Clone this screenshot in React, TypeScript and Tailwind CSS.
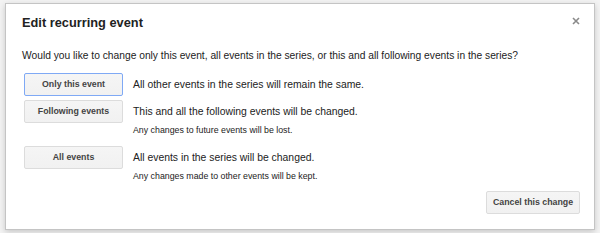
import React from "react";

const btn =
  "h-[23px] rounded-[2px] border bg-gradient-to-b from-[#f5f5f5] to-[#f1f1f1] text-[8.8px] font-bold text-[#444] flex items-center justify-center";

function Row({
  label,
  text,
  sub,
  focused,
}: {
  label: string;
  text: string;
  sub?: string;
  focused?: boolean;
}) {
  return (
    <div className="flex items-start">
      <button
        className={`${btn} w-[99px] shrink-0 ${
          focused ? "border-[#7fa9f5]" : "border-[#dcdcdc]"
        }`}
      >
        {label}
      </button>
      <div className="ml-[10px] flex flex-col">
        <div className="h-[23px] flex items-center text-[10.4px] text-[#222]">{text}</div>
        {sub && <div className="mt-[2px] text-[8.8px] leading-[11px] text-[#222]">{sub}</div>}
      </div>
    </div>
  );
}

export default function App() {
  return (
    <div
      className="w-[600px] h-[233px] bg-[#f3f3f3] pt-[3px] pl-[5px] overflow-hidden"
      style={{ fontFamily: '"Liberation Sans", Arial, sans-serif' }}
    >
      <div className="relative w-[590px] h-[227px] border border-[#c4c4c4] bg-white shadow-[0_2px_6px_rgba(0,0,0,0.18)] pl-[16px] pr-[14px] pt-[11px] flex flex-col">
        <div className="text-[12.8px] leading-[16px] font-bold text-[#222]">Edit recurring event</div>
        <svg
          className="absolute right-[14px] top-[13px]"
          width="8"
          height="8"
          viewBox="0 0 8 8"
        >
          <path d="M1 1L7 7M7 1L1 7" stroke="#8a8a8a" strokeWidth="1.6" />
        </svg>
        <div className="mt-[18px] text-[10.25px] leading-[13px] text-[#222]">
          Would you like to change only this event, all events in the series, or this and all following events in the series?
        </div>
        <div className="mt-[11px] flex flex-col ml-[2px]">
          <Row label="Only this event" text="All other events in the series will remain the same." focused />
          <div className="mt-[4px]">
            <Row
              label="Following events"
              text="This and all the following events will be changed."
              sub="Any changes to future events will be lost."
            />
          </div>
          <div className="mt-[10px]">
            <Row
              label="All events"
              text="All events in the series will be changed."
              sub="Any changes made to other events will be kept."
            />
          </div>
        </div>
        <div className="flex justify-end mt-[9px]">
          <button className={`${btn} w-[94px] border-[#dcdcdc]`}>Cancel this change</button>
        </div>
      </div>
    </div>
  );
}
